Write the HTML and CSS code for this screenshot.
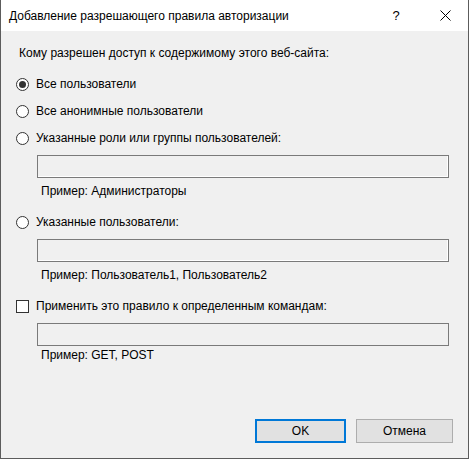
FILE: index.html
```html
<!DOCTYPE html>
<html lang="ru">
<head>
<meta charset="utf-8">
<title>Добавление разрешающего правила авторизации</title>
<link rel="stylesheet" href="styles.css">
</head>
<body>
<div class="window">
  <div class="titlebar">
    <span class="title">Добавление разрешающего правила авторизации</span>
    <span class="help">?</span>
    <span class="close">
      <svg width="11" height="11" viewBox="0 0 11 11"><path d="M0.5 0.5 L10.5 10.5 M10.5 0.5 L0.5 10.5" stroke="#000" stroke-width="1" fill="none"/></svg>
    </span>
  </div>
  <div class="content">
    <div class="prompt">Кому разрешен доступ к содержимому этого веб-сайта:</div>

    <div class="option first"><span class="radio checked"></span>Все пользователи</div>
    <div class="option"><span class="radio"></span>Все анонимные пользователи</div>
    <div class="option"><span class="radio"></span>Указанные роли или группы пользователей:</div>
    <div class="field inset"></div>
    <div class="hint">Пример: Администраторы</div>

    <div class="option spaced"><span class="radio"></span>Указанные пользователи:</div>
    <div class="field inset"></div>
    <div class="hint">Пример: Пользователь1, Пользователь2</div>

    <div class="option spaced"><span class="check"></span>Применить это правило к определенным командам:</div>
    <div class="field plain"></div>
    <div class="hint tight">Пример: GET, POST</div>

    <div class="buttons">
      <div class="btn default">OK</div>
      <div class="btn">Отмена</div>
    </div>
  </div>
</div>
</body>
</html>
```
FILE: styles.css
```css
html, body {
  margin: 0;
  padding: 0;
}

body {
  width: 469px;
  height: 459px;
  font-family: "Liberation Sans", Arial, sans-serif;
  font-size: 12px;
  color: #000;
}

.window {
  box-sizing: border-box;
  width: 469px;
  height: 459px;
  border: 1px solid #5c5c5c;
  border-top: none;
  background: #f0f0f0;
  display: flex;
  flex-direction: column;
}

.titlebar {
  height: 31px;
  background: #fff;
  display: flex;
  align-items: center;
  padding-left: 8px;
  flex-shrink: 0;
}

.title {
  flex: 1;
  font-size: 12px;
  line-height: 16px;
  padding-top: 1px;
}

.help {
  width: 12px;
  text-align: center;
  font-size: 13px;
  margin-right: 38px;
}

.close {
  width: 11px;
  height: 11px;
  margin-right: 17px;
  display: flex;
}

.content {
  flex: 1;
  display: flex;
  flex-direction: column;
  padding: 14px 15px 0 15px;
  line-height: 16px;
}

.prompt {
  padding-left: 3px;
}

.option {
  display: flex;
  align-items: center;
  margin-top: 11px;
}

.option.first {
  margin-top: 15px;
}

.option.spaced {
  margin-top: 15px;
}

.radio {
  box-sizing: border-box;
  width: 13px;
  height: 13px;
  border: 1px solid #333;
  border-radius: 50%;
  background: #fff;
  margin-right: 7px;
  display: flex;
  align-items: center;
  justify-content: center;
}

.radio.checked::after {
  content: "";
  width: 7px;
  height: 7px;
  border-radius: 50%;
  background: #333;
}

.check {
  box-sizing: border-box;
  width: 13px;
  height: 13px;
  border: 1px solid #333;
  background: #fff;
  margin-right: 7px;
}

.field {
  box-sizing: border-box;
  height: 23px;
  margin: 9px 4px 0 21px;
  border: 1px solid #7a7a7a;
  background: #f0f0f0;
}

.field.inset {
  box-shadow: inset -1px -1px 0 #fff;
}

.hint {
  margin: 5px 0 0 25px;
}

.hint.tight {
  margin-top: 1px;
}

.buttons {
  margin-top: auto;
  margin-bottom: 15px;
  display: flex;
  justify-content: flex-end;
  gap: 10px;
  padding-right: 0;
}

.btn {
  box-sizing: border-box;
  width: 97px;
  height: 24px;
  border: 1px solid #adadad;
  background: #e1e1e1;
  display: flex;
  align-items: center;
  justify-content: center;
}

.btn.default {
  width: 91px;
  border: 2px solid #0078d7;
}
```
